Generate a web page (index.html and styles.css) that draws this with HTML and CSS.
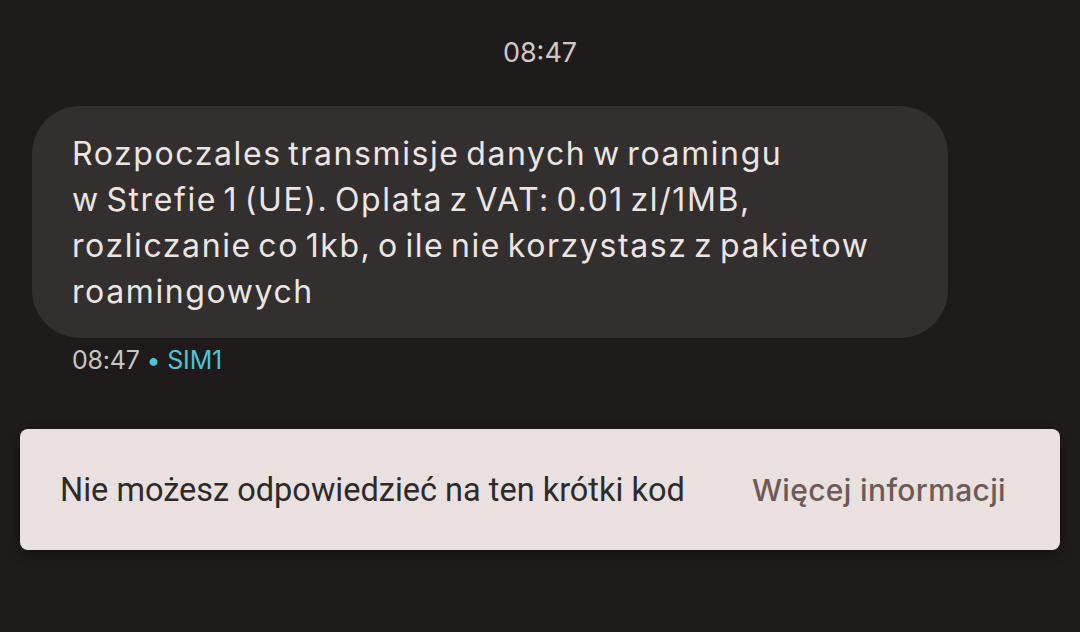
FILE: index.html
```html
<!DOCTYPE html>
<html lang="pl">
<head>
<meta charset="utf-8">
<link rel="stylesheet" href="styles.css">
</head>
<body>
<div class="screen">
  <div class="stamp">08:47</div>
  <div class="msg">
    <div class="bubble">Rozpoczales transmisje danych w roamingu<br>w Strefie 1 (UE). Oplata z VAT: 0.01 zl/1MB,<br>rozliczanie co 1kb, o ile nie korzystasz z pakietow<br>roamingowych</div>
    <div class="meta">08:47 <span class="sim">• SIM1</span></div>
  </div>
  <div class="banner">
    <span class="note">Nie możesz odpowiedzieć na ten krótki kod</span>
    <span class="link">Więcej informacji</span>
  </div>
</div>
</body>
</html>
```
FILE: styles.css
```css
html, body {
  margin: 0;
  padding: 0;
  background: #1f1b1a;
}
.screen {
  width: 1080px;
  height: 632px;
  overflow: hidden;
  font-family: "Inter", "Roboto", sans-serif;
  display: flex;
  flex-direction: column;
}
.stamp {
  text-align: center;
  color: #d0c8c6;
  font-size: 27px;
  line-height: 32px;
  margin-top: 37px;
}
.msg {
  margin-top: 37px;
  padding-left: 32px;
}
.bubble {
  width: 916px;
  box-sizing: border-box;
  background: #332f2e;
  border-radius: 48px;
  padding: 25px 40px 23px 40px;
  color: #ece5e3;
  font-size: 32px;
  line-height: 46px;
  letter-spacing: 1.6px;
  word-spacing: -4px;
}
.meta {
  padding-left: 40px;
  margin-top: 6px;
  font-size: 25px;
  line-height: 32px;
  letter-spacing: -0.2px;
  color: #cbc4c2;
}
.sim {
  color: #4cc3d9;
}
.banner {
  margin: 53px 20px 0 20px;
  height: 121px;
  flex-shrink: 0;
  background: #e8e1df;
  border-radius: 8px;
  box-shadow: 0 4px 12px rgba(0,0,0,0.35);
  display: flex;
  align-items: center;
  justify-content: space-between;
  padding: 0 54px 0 40px;
}
.note {
  font-family: "Roboto", sans-serif;
  color: #2e2a29;
  font-size: 32.5px;
}
.link {
  color: #6e5a57;
  font-size: 30px;
  font-weight: 500;
  letter-spacing: 0.35px;
}
```
